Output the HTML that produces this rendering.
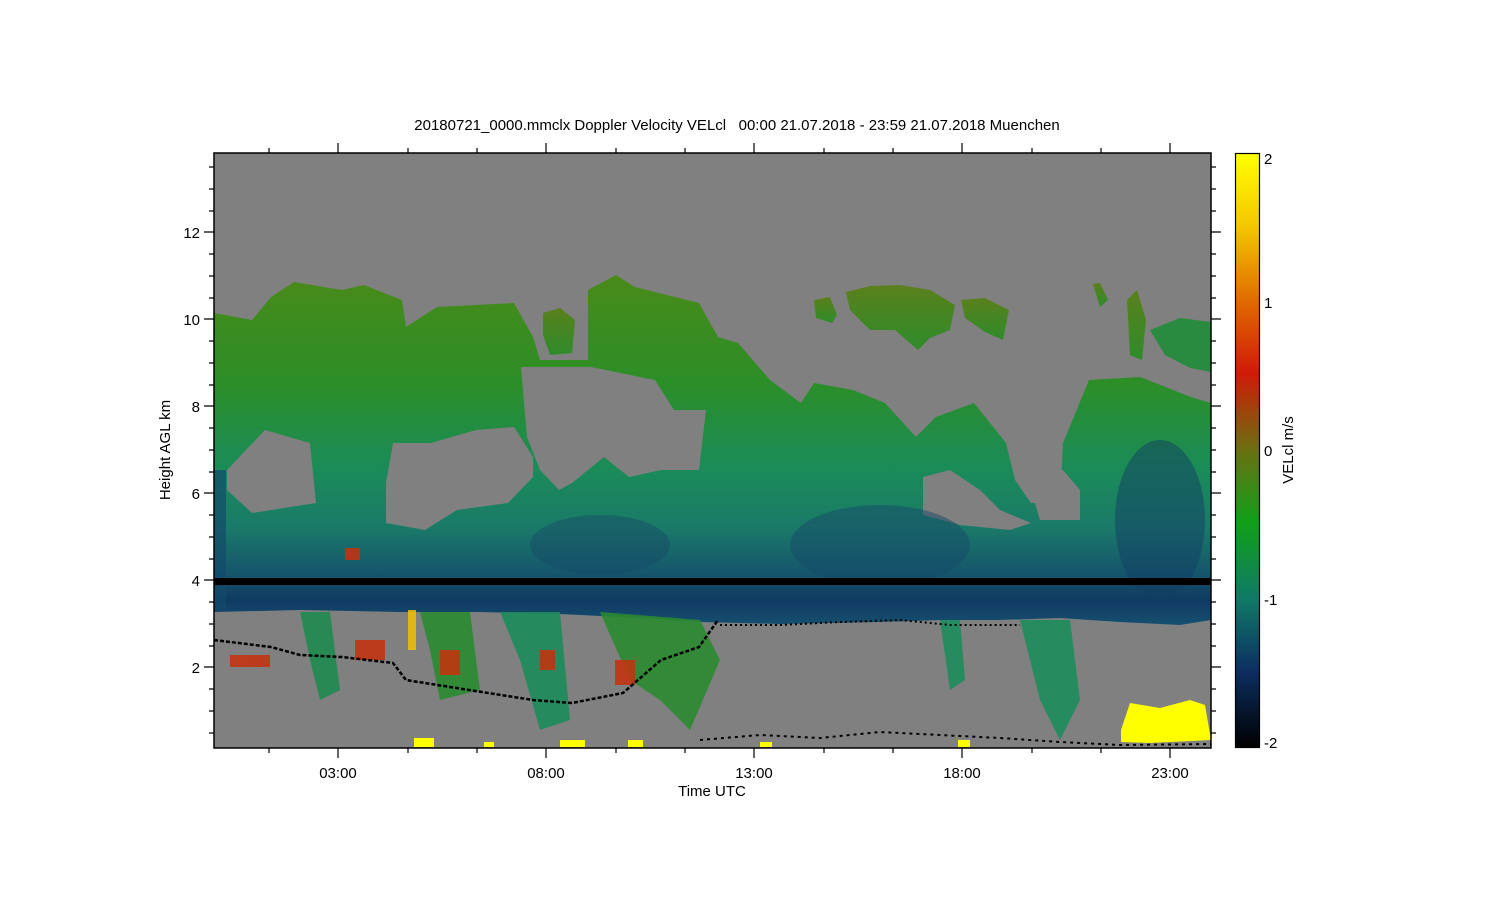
<!DOCTYPE html>
<html><head><meta charset="utf-8"><style>
html,body{margin:0;padding:0;background:#fff;width:1500px;height:900px;overflow:hidden}
svg{display:block}
text{font-family:"Liberation Sans",sans-serif;font-size:15px;fill:#000}
</style></head><body>
<svg width="1500" height="900" viewBox="0 0 1500 900" xmlns="http://www.w3.org/2000/svg">
<defs>
<linearGradient id="cb" x1="0" y1="0" x2="0" y2="1">
<stop offset="0" stop-color="#ffff00"/>
<stop offset="0.12" stop-color="#f5c800"/>
<stop offset="0.25" stop-color="#e06a00"/>
<stop offset="0.37" stop-color="#d01a08"/>
<stop offset="0.5" stop-color="#6a7010"/>
<stop offset="0.62" stop-color="#10a018"/>
<stop offset="0.75" stop-color="#0f7a66"/>
<stop offset="0.87" stop-color="#0c2f62"/>
<stop offset="1" stop-color="#000000"/>
</linearGradient>
<linearGradient id="cl" gradientUnits="userSpaceOnUse" x1="0" y1="275" x2="0" y2="625">
<stop offset="0" stop-color="#4a8a1a"/>
<stop offset="0.3" stop-color="#2c8e26"/>
<stop offset="0.55" stop-color="#1a8c58"/>
<stop offset="0.72" stop-color="#1a7a68"/>
<stop offset="0.85" stop-color="#15566c"/>
<stop offset="0.93" stop-color="#103a62"/>
<stop offset="1" stop-color="#155070"/>
</linearGradient>
<linearGradient id="tp" x1="0" y1="0" x2="0" y2="1">
<stop offset="0" stop-color="#5a801c"/>
<stop offset="1" stop-color="#2e8c2a"/>
</linearGradient>
</defs>
<text x="737" y="130" text-anchor="middle" xml:space="preserve" style="white-space:pre">20180721_0000.mmclx Doppler Velocity VELcl   00:00 21.07.2018 - 23:59 21.07.2018 Muenchen</text>
<rect x="214" y="153" width="997" height="595" fill="#808080"/>
<polygon fill="url(#cl)" points="214,313 252,320 271,297 294,282 342,290 364,285 402,300 406,327 437,307 514,303 533,337 540,360 588,360 588,290 616,275 635,287 699,303 718,337 738,343 770,380 801,403 814,383 853,390 885,403 916,437 936,417 974,403 1006,443 1025,470 1063,443 1089,380 1140,377 1191,397 1211,403 1211,620 1180,625 1120,622 1060,618 1000,620 940,620 880,622 780,624 700,622 640,618 560,614 480,612 400,612 300,610 214,612"/>
<polygon fill="#808080" points="227,470 265,430 310,443 316,503 252,513 227,490"/>
<polygon fill="#808080" points="393,443 431,443 476,430 514,427 533,457 533,477 508,503 457,510 425,530 386,523 386,483"/>
<polygon fill="#808080" points="521,367 591,367 655,380 674,410 706,410 699,470 661,470 629,477 604,457 572,483 559,490 540,470 527,437"/>
<polygon fill="#808080" points="533,300 588,300 588,360 540,360"/>
<polygon fill="#808080" points="923,477 950,470 980,490 1000,510 1031,523 1010,530 960,525 923,515"/>
<polygon fill="#808080" points="1006,443 1063,443 1060,503 1031,503 1015,480"/>
<polygon fill="#808080" points="1025,470 1063,470 1080,490 1080,520 1040,520"/>
<polygon fill="url(#tp)" points="543,313 560,308 575,320 572,353 550,355 543,335"/>
<polygon fill="url(#tp)" points="814,300 830,297 837,315 832,323 816,318"/>
<polygon fill="url(#tp)" points="846,292 870,286 900,285 930,290 955,305 950,330 930,338 918,350 895,330 870,330 850,310"/>
<polygon fill="url(#tp)" points="961,300 985,298 1009,310 1003,340 985,332 965,318"/>
<polygon fill="url(#tp)" points="1093,284 1100,283 1108,300 1100,307"/>
<polygon fill="url(#tp)" points="1127,300 1137,290 1146,320 1142,360 1130,355"/>
<polygon fill="#2a8a40" points="1150,330 1180,318 1211,322 1211,372 1190,368 1165,355"/>
<ellipse cx="880" cy="545" rx="90" ry="40" fill="#164a68" opacity="0.5"/>
<ellipse cx="600" cy="545" rx="70" ry="30" fill="#164a68" opacity="0.45"/>
<ellipse cx="1160" cy="520" rx="45" ry="80" fill="#113d64" opacity="0.5"/>
<rect x="214" y="470" width="12" height="140" fill="#134a6a" opacity="0.7"/>
<g opacity="0.9">
<polygon fill="#1f8a50" points="300,612 330,612 340,690 320,700 310,660"/>
<polygon fill="#2a8a30" points="420,612 470,612 480,690 440,700 430,650"/>
<polygon fill="#1d8c5c" points="500,612 560,612 570,720 540,730 520,660"/>
<polygon fill="#2a8a30" points="600,612 700,620 720,660 690,730 660,700 630,680"/>
<polygon fill="#1d8c5c" points="1020,620 1070,620 1080,700 1060,740 1040,700"/>
<polygon fill="#1d8c5c" points="940,620 960,620 965,680 950,690"/>
</g>
<g fill="#c8300c" opacity="0.85">
<rect x="355" y="640" width="30" height="20"/>
<rect x="440" y="650" width="20" height="25"/>
<rect x="540" y="650" width="15" height="20"/>
<rect x="615" y="660" width="20" height="25"/>
<rect x="230" y="655" width="40" height="12"/>
<rect x="408" y="610" width="8" height="40" fill="#f0c000"/>
<rect x="345" y="548" width="15" height="12"/>
</g>
<g fill="#ffff00">
<polygon points="1121,730 1130,703 1160,708 1190,700 1205,705 1211,740 1150,743 1121,742"/>
<rect x="414" y="738" width="20" height="9"/>
<rect x="560" y="740" width="25" height="7"/>
<rect x="628" y="740" width="15" height="7"/>
<rect x="760" y="742" width="12" height="5"/>
<rect x="958" y="740" width="12" height="7"/>
<rect x="484" y="742" width="10" height="5"/>
</g>
<rect x="214" y="578" width="997" height="7" fill="#000"/>
<polyline fill="none" stroke="#000" stroke-width="2.5" stroke-dasharray="4 2" points="214,640 271,647 300,655 342,657 393,663 406,680 469,690 533,700 572,703 623,693 661,660 699,647 718,620"/>
<polyline fill="none" stroke="#000" stroke-width="2" stroke-dasharray="3 4" points="700,740 760,735 820,738 880,732 940,735 1000,738 1060,742 1120,745 1211,744"/>
<polyline fill="none" stroke="#000" stroke-width="2" stroke-dasharray="2 3" points="720,625 780,625 840,622 900,620 950,625 1020,625"/>
<rect x="214" y="153" width="997" height="595" fill="none" stroke="#000" stroke-width="1.5"/>
<g stroke="#000" stroke-width="1.2">
<path d="M269,748v5M338,748v10M408,748v5M477,748v5M546,748v10M616,748v5M685,748v5M754,748v10M824,748v5M893,748v5M962,748v10M1032,748v5M1101,748v5M1170,748v10
M269,153v-5M338,153v-10M408,153v-5M477,153v-5M546,153v-10M616,153v-5M685,153v-5M754,153v-10M824,153v-5M893,153v-5M962,153v-10M1032,153v-5M1101,153v-5M1170,153v-10"/>
<path d="M214,167h-5M214,189h-5M214,211h-5M214,232h-10M214,254h-5M214,276h-5M214,298h-5M214,319h-10M214,341h-5M214,363h-5M214,385h-5M214,406h-10M214,428h-5M214,450h-5M214,472h-5M214,493h-10M214,515h-5M214,537h-5M214,559h-5M214,580h-10M214,602h-5M214,624h-5M214,646h-5M214,667h-10M214,689h-5M214,711h-5M214,733h-5
M1211,167h5M1211,189h5M1211,211h5M1211,232h10M1211,254h5M1211,276h5M1211,298h5M1211,319h10M1211,341h5M1211,363h5M1211,385h5M1211,406h10M1211,428h5M1211,450h5M1211,472h5M1211,493h10M1211,515h5M1211,537h5M1211,559h5M1211,580h10M1211,602h5M1211,624h5M1211,646h5M1211,667h10M1211,689h5M1211,711h5M1211,733h5"/>
</g>
<g text-anchor="end">
<text x="200" y="238">12</text><text x="200" y="325">10</text><text x="200" y="412">8</text><text x="200" y="499">6</text><text x="200" y="586">4</text><text x="200" y="673">2</text>
</g>
<g text-anchor="middle">
<text x="338" y="778">03:00</text><text x="546" y="778">08:00</text><text x="754" y="778">13:00</text><text x="962" y="778">18:00</text><text x="1170" y="778">23:00</text>
<text x="712" y="796">Time UTC</text>
</g>
<text transform="translate(170,450) rotate(-90)" text-anchor="middle">Height AGL km</text>
<rect x="1235.5" y="153.5" width="24" height="594" fill="url(#cb)" stroke="#000" stroke-width="1.2"/>
<text x="1264" y="164">2</text><text x="1264" y="308">1</text><text x="1264" y="456">0</text><text x="1264" y="605">-1</text><text x="1264" y="748">-2</text>
<text transform="translate(1293,450) rotate(-90)" text-anchor="middle">VELcl m/s</text>
</svg>
</body></html>
